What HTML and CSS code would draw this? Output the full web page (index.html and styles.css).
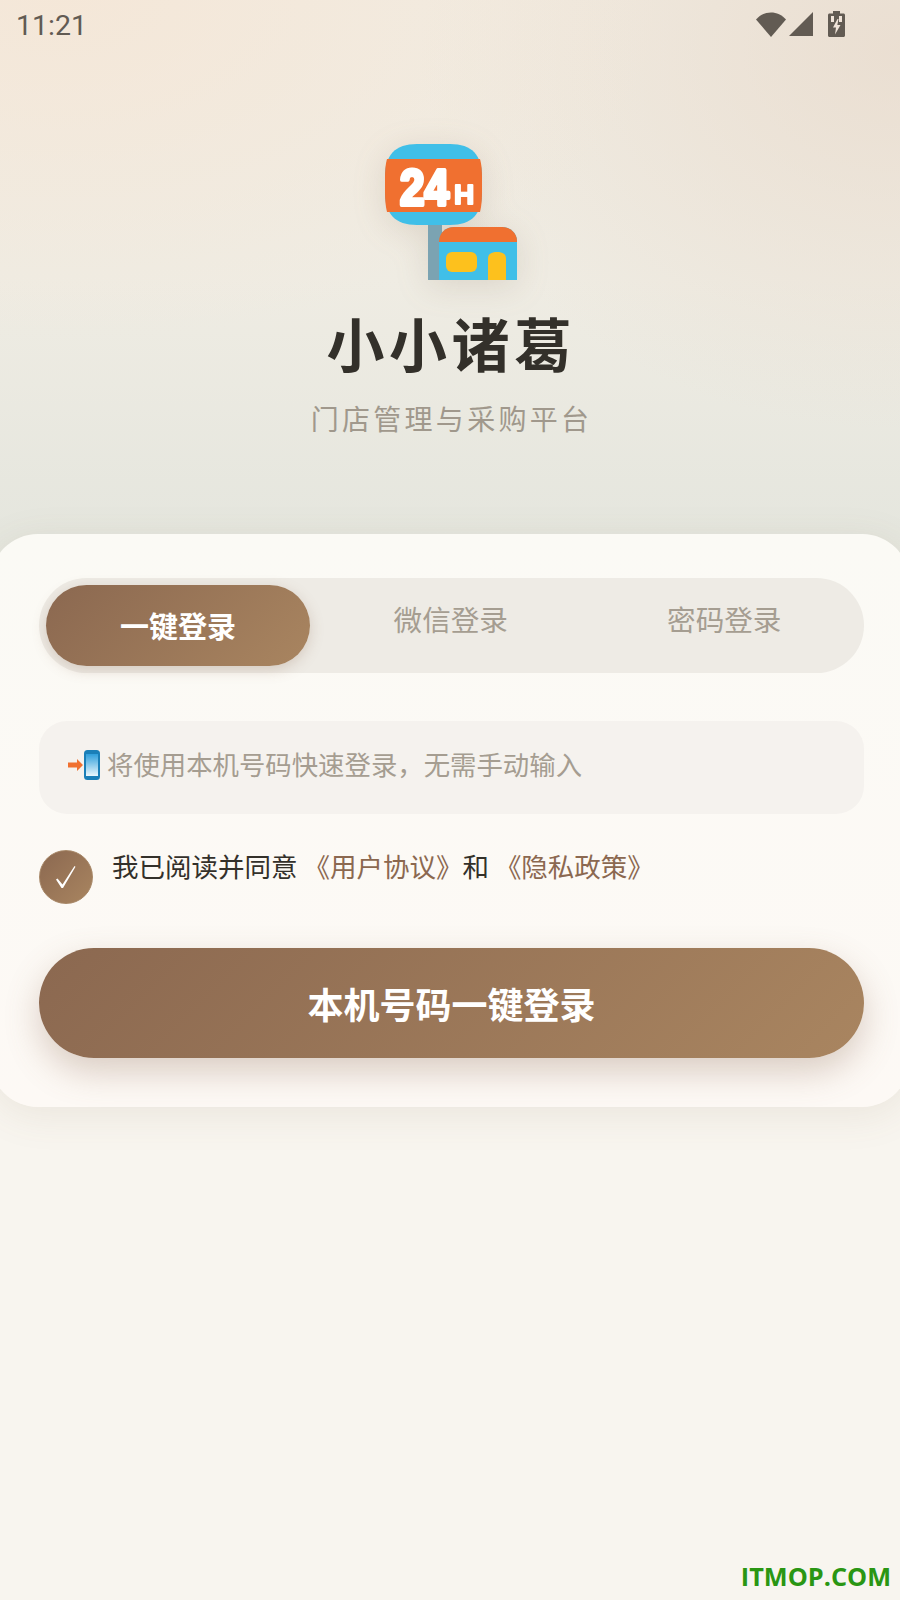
FILE: index.html
```html
<!DOCTYPE html>
<html lang="zh-CN">
<head>
    <meta charset="UTF-8">
    <meta name="viewport" content="width=device-width, initial-scale=1.0">
    <title>小小诸葛</title>
    <link rel="stylesheet" href="styles.css">
</head>
<body>
    <div class="page">
        <div class="status-bar">
            <span class="time">11:21</span>
            <div class="status-icons">
                <svg width="30" height="25" viewBox="0 0 30 25"><path d="M0 7.500C8 -2 22 -2 30 7.500L15 25Z" fill="#625b53"/></svg>
                <svg width="24" height="24" viewBox="0 0 24 24"><path d="M24 0V24H0Z" fill="#625b53"/></svg>
                <svg class="icon-battery" width="17" height="26" viewBox="0 0 17 26"><path d="M5 0H12V2.500H15.500C16.300 2.500 17 3.200 17 4V24.500C17 25.300 16.300 26 15.500 26H1.500C.7 26 0 25.300 0 24.500V4C0 3.200 .7 2.500 1.500 2.500H5Z" fill="#625b53"/><path d="M9.500 8L5 16.500H8L7 23.500L12.500 14H9.300L10.500 8Z" fill="#f0e4d9"/><rect x="3" y="5" width="3" height="6" fill="#f0e4d9"/><rect x="11" y="5" width="3" height="6" fill="#f0e4d9"/></svg>
            </div>
        </div>

        <div class="hero">
            <svg class="logo" width="132" height="136" viewBox="0 0 132 136">
                <rect x="43" y="78" width="14" height="58" fill="#7ba3b2"/>
                <path d="M32 0H65C87 0 97 11 97 33V48C97 70 87 81 65 81H32C10 81 0 70 0 48V33C0 11 10 0 32 0Z" fill="#40bfe8"/>
                <path d="M2 15H95C96.500 20 97 26 97 33V48C97 56 96.500 62 95 68H2C.5 62 0 56 0 48V33C0 26 .5 20 2 15Z" fill="#f07030"/>
                <text class="logo-24" transform="translate(15 60.500) scale(1 1.150)">24</text>
                <text class="logo-h" x="69" y="60">H</text>
                <path d="M54 136V97C54 89 61 83 69 83H117C125 83 132 89 132 97V136Z" fill="#40bfe8"/>
                <path d="M54 98V97C54 89 61 83 69 83H117C125 83 132 89 132 97V98Z" fill="#f07030"/>
                <rect x="61" y="108" width="31" height="20" rx="6" fill="#fdc11d"/>
                <path d="M103 136V115C103 110 106 108 112 108C118 108 121 110 121 115V136Z" fill="#fdc11d"/>
            </svg>
            <h1 class="app-name">小小诸葛</h1>
            <p class="slogan">门店管理与采购平台</p>
        </div>

        <div class="card">
            <div class="tabs">
                <div class="tab tab-active">一键登录</div>
                <div class="tab">微信登录</div>
                <div class="tab">密码登录</div>
            </div>

            <div class="tip-box">
                <svg class="tip-icon" width="32" height="30" viewBox="0 0 32 30">
                    <defs>
                        <linearGradient id="screen" x1="0" y1="0" x2="0" y2="1">
                            <stop offset="0" stop-color="#2f9fdc"/>
                            <stop offset="1" stop-color="#eaf7fd"/>
                        </linearGradient>
                    </defs>
                    <path d="M0 12.500H9V9L15 15L9 21V17.500H0Z" fill="#f0702f"/>
                    <rect x="16" y="0" width="16" height="30" rx="3.500" fill="#1a7fb8"/>
                    <rect x="18" y="4" width="12" height="22" fill="url(#screen)"/>
                </svg>
                <span>将使用本机号码快速登录，无需手动输入</span>
            </div>

            <div class="agreement">
                <div class="checkbox">
                    <svg width="20" height="22" viewBox="0 0 20 22"><path d="M0 13.500L1.500 12.500L6.500 18.500L18.500 0L19.500 .8L7 22H5.500Z" fill="#fff"/></svg>
                </div>
                <p class="agreement-text">我已阅读并同意 <a>《用户协议》</a>和 <a>《隐私政策》</a></p>
            </div>

            <button class="btn-login" type="button">本机号码一键登录</button>
        </div>
    </div>
    <div class="watermark">ITMOP.COM</div>
</body>
</html>
```

FILE: styles.css
```css
* {
    box-sizing: border-box;
}
html, body {
    margin: 0;
    padding: 0;
}
body {
    width: 900px;
    height: 1600px;
    overflow: hidden;
    position: relative;
    font-family: "Noto Sans CJK SC", "Noto Sans", sans-serif;
    background: #f8f5ef;
}
.page {
    height: 1600px;
    background:
        radial-gradient(ellipse 620px 340px at 60px 0, rgba(246, 229, 212, 0.7) 0%, rgba(246, 229, 212, 0) 100%),
        radial-gradient(ellipse 480px 380px at 900px 50px, rgba(232, 218, 204, 0.75) 0%, rgba(232, 218, 204, 0) 100%),
        linear-gradient(180deg, #f1ece2 0%, #efece3 280px, #e5e6de 534px, #f8f5ef 1100px);
}
.status-bar {
    height: 50px;
    display: flex;
    justify-content: space-between;
    align-items: center;
    padding: 0 55px 2px 16px;
}
.time {
    margin-top: 2px;
    font-family: Roboto, sans-serif;
    font-size: 28.500px;
    color: #625b53;
}
.status-icons {
    display: flex;
    align-items: center;
    gap: 3px;
}
.icon-battery {
    margin-left: 12px;
}
.hero {
    display: flex;
    flex-direction: column;
    align-items: center;
    padding-top: 94px;
    height: 484px;
}
.logo {
    margin-left: 2px;
    filter: drop-shadow(0 6px 16px rgba(120, 95, 70, 0.16));
}
.logo-24 {
    font-family: "Liberation Sans", sans-serif;
    font-weight: 700;
    font-size: 44px;
    fill: #fff;
    stroke: #fff;
    stroke-width: 3.500px;
    stroke-linejoin: round;
}
.logo-h {
    font-family: "Liberation Sans", sans-serif;
    font-weight: 700;
    font-size: 28px;
    fill: #fff;
    stroke: #fff;
    stroke-width: 2px;
    stroke-linejoin: round;
}
.app-name {
    margin: 24px 0 0;
    padding-left: 3px;
    font-size: 58px;
    line-height: 76px;
    font-weight: 700;
    letter-spacing: 4.500px;
    color: #33302a;
}
.slogan {
    margin: 16px 0 0;
    padding-left: 3px;
    font-size: 28px;
    line-height: 44px;
    letter-spacing: 3.300px;
    color: #a0988c;
}
.card {
    width: 920px;
    margin: 0 -10px;
    height: 573px;
    padding: 44px 46px 0 49px;
    border-radius: 48px;
    background: linear-gradient(180deg, #fbfaf5 0%, #fdf9f5 100%);
    box-shadow: 0 8px 40px rgba(120, 95, 70, 0.1);
}
.tabs {
    display: flex;
    height: 95px;
    padding: 7px;
    border-radius: 48px;
    background: #eeebe5;
}
.tab {
    flex: 1;
    display: flex;
    align-items: center;
    justify-content: center;
    padding: 0 0 14px 8px;
    font-size: 28.600px;
    color: #a59d91;
}
.tab-active {
    flex: 0 0 264px;
    padding: 0 0 2px;
    border-radius: 41px;
    font-size: 29px;
    font-weight: 700;
    color: #fff;
    background: linear-gradient(135deg, #8b6850 0%, #a98560 100%);
    box-shadow: 0 4px 14px rgba(139, 104, 80, 0.25);
}
.tip-box {
    display: flex;
    align-items: center;
    gap: 7px;
    height: 93px;
    margin-top: 48px;
    padding: 0 28px 6px 29px;
    border-radius: 28px;
    background: #f5f2ee;
    font-size: 26.400px;
    color: #a59d91;
}
.tip-box span {
    margin-top: -2px;
}
.agreement {
    display: flex;
    align-items: flex-start;
    gap: 19px;
    margin-top: 36px;
}
.checkbox {
    width: 54px;
    height: 54px;
    flex: none;
    display: flex;
    align-items: center;
    justify-content: center;
    border-radius: 50%;
    border: 1px solid #a88868;
    background: linear-gradient(135deg, #8b6850 0%, #a98560 100%);
}
.agreement-text {
    margin: -1px 0 0;
    font-size: 26.500px;
    line-height: 34px;
    color: #33302a;
}
.agreement-text a {
    color: #8b6850;
}
.btn-login {
    display: block;
    width: 100%;
    height: 110px;
    margin-top: 44px;
    border: none;
    border-radius: 55px;
    font-family: inherit;
    font-size: 36px;
    font-weight: 700;
    color: #fff;
    background: linear-gradient(135deg, #8b6850 0%, #a98560 100%);
    box-shadow: 0 14px 34px rgba(139, 104, 80, 0.3);
}
.watermark {
    position: absolute;
    right: 9px;
    bottom: 7px;
    font-family: "Open Sans", sans-serif;
    font-weight: 700;
    font-size: 25.300px;
    line-height: 34px;
    color: #2a9613;
}
```
